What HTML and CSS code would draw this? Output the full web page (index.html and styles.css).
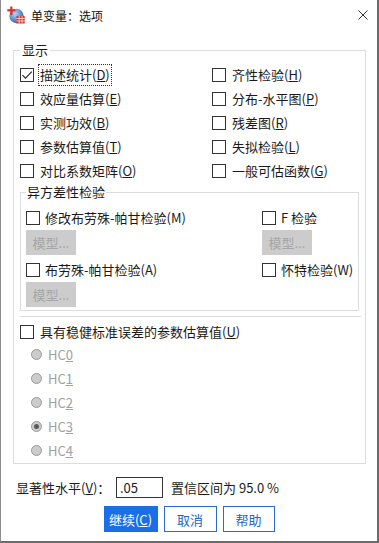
FILE: index.html
```html
<!DOCTYPE html>
<html lang="zh-CN">
<head>
<meta charset="utf-8">
<title>单变量：选项</title>
<link rel="stylesheet" href="styles.css">
</head>
<body>
<div class="window">
  <div class="titlebar">
    <svg class="app-icon" width="18" height="18" viewBox="0 0 18 18">
      <defs>
        <radialGradient id="g" cx="0.4" cy="0.35" r="0.7">
          <stop offset="0" stop-color="#b9d4f2"/>
          <stop offset="0.6" stop-color="#5d8fd0"/>
          <stop offset="1" stop-color="#2f5f9f"/>
        </radialGradient>
      </defs>
      <circle cx="9.5" cy="10" r="7.2" fill="url(#g)"/>
      <rect x="3.2" y="0.5" width="2.2" height="8.5" fill="#d8312b"/>
      <rect x="0.3" y="3.2" width="8" height="2.2" fill="#d8312b"/>
      <rect x="9.5" y="10" width="8.2" height="7.5" fill="#d9342d"/>
      <path d="M9.5 12.5H17.7M9.5 15H17.7M12.2 10V17.5M15 10V17.5" stroke="#fbe3e1" stroke-width="0.8"/>
    </svg>
    <span class="title">单变量：选项</span>
    <svg class="close" width="10" height="10" viewBox="0 0 10 10">
      <path d="M0.5 0.5L9.5 9.5M9.5 0.5L0.5 9.5" stroke="#333" stroke-width="1"/>
    </svg>
  </div>

  <fieldset class="group">
    <legend>显示</legend>
    <div class="opts">
      <label class="chk"><span class="box checked"><svg width="12" height="12" viewBox="0 0 12 12"><path d="M1.5 6.2L4.5 9.2L10.8 2.6" fill="none" stroke="#222" stroke-width="1.1"/></svg></span><span class="lbl focus">描述统计(<u>D</u>)</span></label>
      <label class="chk"><span class="box"></span><span class="lbl">齐性检验(<u>H</u>)</span></label>
      <label class="chk"><span class="box"></span><span class="lbl">效应量估算(<u>E</u>)</span></label>
      <label class="chk"><span class="box"></span><span class="lbl">分布-水平图(<u>P</u>)</span></label>
      <label class="chk"><span class="box"></span><span class="lbl">实测功效(<u>B</u>)</span></label>
      <label class="chk"><span class="box"></span><span class="lbl">残差图(<u>R</u>)</span></label>
      <label class="chk"><span class="box"></span><span class="lbl">参数估算值(<u>T</u>)</span></label>
      <label class="chk"><span class="box"></span><span class="lbl">失拟检验(<u>L</u>)</span></label>
      <label class="chk"><span class="box"></span><span class="lbl">对比系数矩阵(<u>O</u>)</span></label>
      <label class="chk"><span class="box"></span><span class="lbl">一般可估函数(<u>G</u>)</span></label>
    </div>

    <fieldset class="sub">
      <legend>异方差性检验</legend>
      <div class="subgrid">
        <label class="chk"><span class="box"></span><span class="lbl tight">修改布劳殊-帕甘检验(M)</span></label>
        <label class="chk"><span class="box"></span><span class="lbl tight">F 检验</span></label>
        <button class="btn-dis" disabled>模型...</button>
        <button class="btn-dis" disabled>模型...</button>
        <label class="chk"><span class="box"></span><span class="lbl tight">布劳殊-帕甘检验(A)</span></label>
        <label class="chk"><span class="box"></span><span class="lbl tight">怀特检验(W)</span></label>
        <button class="btn-dis" disabled>模型...</button>
      </div>
    </fieldset>

    <div class="sep"></div>

    <label class="chk robust"><span class="box"></span><span class="lbl">具有稳健标准误差的参数估算值(<u>U</u>)</span></label>
    <div class="radios">
      <div class="radio"><span class="dot"></span><span>HC<u>0</u></span></div>
      <div class="radio"><span class="dot"></span><span>HC<u>1</u></span></div>
      <div class="radio"><span class="dot"></span><span>HC<u>2</u></span></div>
      <div class="radio"><span class="dot on"></span><span>HC<u>3</u></span></div>
      <div class="radio"><span class="dot"></span><span>HC<u>4</u></span></div>
    </div>
  </fieldset>

  <div class="sig">
    <span class="sig-label">显著性水平(<u>V</u>)：</span>
    <span class="input">.05</span>
    <span class="ci">置信区间为 95.0 %</span>
  </div>

  <div class="actions">
    <button class="btn primary w54">继续(<u>C</u>)</button>
    <button class="btn w53">取消</button>
    <button class="btn w52">帮助</button>
  </div>
</div>
</body>
</html>
```
FILE: styles.css
```css
* { box-sizing: border-box; }
html, body { margin: 0; padding: 0; background: #fff; }
body {
  font-family: "Noto Sans CJK SC", "Microsoft YaHei", sans-serif;
  font-size: 13px;
  color: #1a1a1a;
}
u { text-underline-offset: 1px; }

.window {
  width: 379px;
  height: 543px;
  border-left: 1px solid #8c8c8c;
  border-right: 2px solid #6b6b6b;
  border-bottom: 2px solid #6b6b6b;
  background: #fff;
  overflow: hidden;
}

.titlebar {
  height: 30px;
  display: flex;
  align-items: center;
  padding: 0 9px 0 6px;
}
.app-icon { flex: none; }
.title { font-size: 12px; margin-left: 6px; color: #111; }
.close { margin-left: auto; flex: none; }

.group {
  margin: 12px 0 0 12px;
  width: 353px;
  min-width: 0;
  border: 1px solid #dcdcdc;
  padding: 5px 6px 1px 6px;
}
.group > legend {
  padding: 0 2px;
  line-height: 16px;
}

.opts {
  display: grid;
  grid-template-columns: 192px 1fr;
  grid-auto-rows: 24px;
}
.chk { display: flex; align-items: center; }
.box {
  width: 14px;
  height: 14px;
  flex: none;
  border: 1px solid #333;
  background: #fff;
  margin-right: 4px;
  display: flex;
  align-items: center;
  justify-content: center;
}
.lbl {
  border: 1px solid transparent;
  padding: 0 1px;
  line-height: 20px;
  white-space: nowrap;
}
.lbl.focus { border: 1px dotted #333; }
.lbl.tight { margin-left: -1px; }

.sub {
  margin: 1px 0 0 0;
  min-width: 0;
  border: 1px solid #dcdcdc;
  padding: 7px 6px 3px 5px;
}
.sub > legend {
  padding: 0 1px;
  line-height: 16px;
}
.subgrid {
  display: grid;
  grid-template-columns: 236px 1fr;
  grid-template-rows: 22px 26px 26px 26px;
}
.subgrid > * { align-self: end; }
.subgrid .chk { height: 22px; }
.btn-dis {
  width: 50px;
  height: 25px;
  background: #cccccc;
  color: #a6a6a6;
  border: none;
  padding: 0;
  font: inherit;
}

.sep {
  height: 1px;
  background: #dcdcdc;
  margin: 5px -2px 0 0;
}
.robust { height: 20px; margin-top: 5px; }

.radios { padding-left: 11px; }
.radio {
  height: 24px;
  display: flex;
  align-items: center;
  color: #a0a0a0;
}
.dot {
  width: 11px;
  height: 11px;
  border-radius: 50%;
  border: 1px solid #999;
  background: #cccccc;
  margin-right: 6px;
  flex: none;
  display: flex;
  align-items: center;
  justify-content: center;
}
.dot.on::after {
  content: "";
  width: 5px;
  height: 5px;
  border-radius: 50%;
  background: #5a5a5a;
}

.sig {
  display: flex;
  align-items: center;
  height: 21px;
  margin-top: 13px;
  padding-left: 15px;
}
.sig-label { width: 100px; white-space: nowrap; }
.input {
  width: 47px;
  height: 21px;
  border: 1px solid #333;
  padding-left: 3px;
  line-height: 19px;
}
.ci { margin-left: 8px; }

.actions {
  display: flex;
  justify-content: center;
  gap: 6px;
  margin-top: 8px;
}
.btn {
  height: 26px;
  border: 1px solid #2b6ad0;
  background: #fff;
  color: #2563c7;
  font: inherit;
  padding: 0;
}
.btn.primary {
  background: #1a6fe6;
  border-color: #1a6fe6;
  color: #fff;
}
.w54 { width: 54px; }
.w53 { width: 53px; }
.w52 { width: 52px; }
```
